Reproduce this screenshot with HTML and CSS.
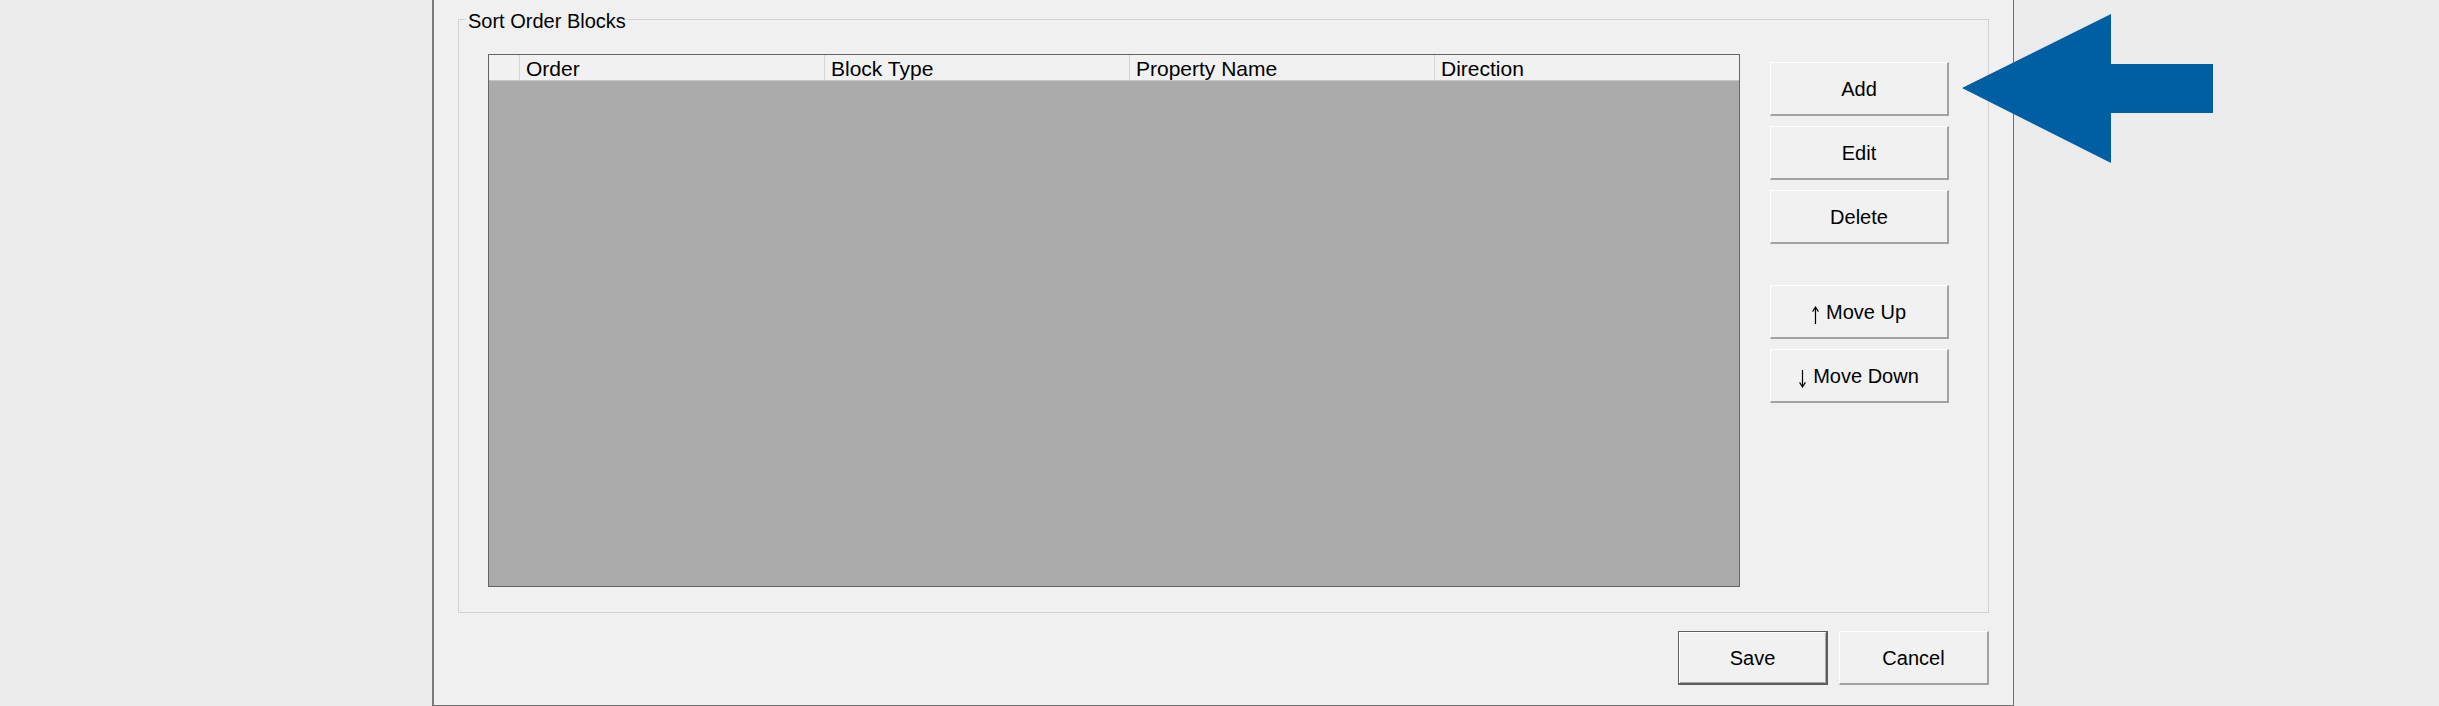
FILE: index.html
```html
<!DOCTYPE html>
<html lang="en">
<head>
<meta charset="utf-8">
<title>Sort Order Blocks</title>
<link rel="stylesheet" href="styles.css">
</head>
<body>
  <div class="window">
    <div class="group">
      <span class="group-title">Sort Order Blocks</span>
      <div class="grid-view">
        <div class="grid-header">
          <div class="col-rowhead"></div>
          <div class="col">Order</div>
          <div class="col">Block Type</div>
          <div class="col">Property Name</div>
          <div class="col col-last">Direction</div>
        </div>
        <div class="grid-body"></div>
      </div>
      <div class="side-buttons">
        <button class="btn">Add</button>
        <button class="btn">Edit</button>
        <button class="btn">Delete</button>
        <div class="spacer"></div>
        <button class="btn"><svg class="btn-arrow" width="7" height="18" viewBox="0 0 7 18" aria-hidden="true"><path d="M3.5 1V18M0.6 5.6L3.5 1L6.4 5.6" fill="none" stroke="#000" stroke-width="1.2"/></svg><span>Move Up</span></button>
        <button class="btn"><svg class="btn-arrow" width="7" height="18" viewBox="0 0 7 18" aria-hidden="true"><path d="M3.5 0V17M0.6 12.4L3.5 17L6.4 12.4" fill="none" stroke="#000" stroke-width="1.2"/></svg><span>Move Down</span></button>
      </div>
    </div>
    <div class="dialog-buttons">
      <button class="btn btn-default">Save</button>
      <button class="btn">Cancel</button>
    </div>
  </div>
  <svg class="callout-arrow" width="251" height="149" viewBox="0 0 251 149" aria-hidden="true">
    <polygon points="0,74 149,0 149,50 251,50 251,99 149,99 149,149" fill="#005fa3"/>
  </svg>
</body>
</html>
```

FILE: styles.css
```css
html, body {
  margin: 0;
  padding: 0;
}

body {
  position: relative;
  width: 2439px;
  height: 706px;
  overflow: hidden;
  background: #ebebeb;
  font-family: "Liberation Sans", Arial, sans-serif;
  color: #000;
}

.window {
  margin-left: 432px;
  width: 1582px;
  height: 706px;
  box-sizing: border-box;
  border-left: 2px solid #7a7a7a;
  border-right: 1px solid #6e6e6e;
  border-bottom: 1px solid #6e6e6e;
  background: #f0f0f0;
  padding: 19px 24px 0 24px;
  display: flex;
  flex-direction: column;
}

.group {
  position: relative;
  height: 594px;
  box-sizing: border-box;
  border: 1px solid #d2d2d2;
  padding: 34px 0 0 29px;
  display: flex;
  align-items: flex-start;
  gap: 30px;
}

.group-title {
  position: absolute;
  top: -10px;
  left: 7px;
  padding: 0 2px;
  background: #f0f0f0;
  font-size: 20px;
  line-height: 23px;
}

.grid-view {
  width: 1252px;
  height: 533px;
  box-sizing: border-box;
  border: 1px solid #646464;
  background: #ababab;
  display: flex;
  flex-direction: column;
}

.grid-header {
  display: flex;
  height: 26px;
  box-sizing: border-box;
  background: #f1f1f1;
  border-bottom: 1px solid #c6c6c6;
  font-size: 21px;
  line-height: 23px;
}

.col-rowhead {
  width: 31px;
  box-sizing: border-box;
  border-right: 1px solid #d4d4d4;
}

.col {
  width: 305px;
  box-sizing: border-box;
  border-right: 1px solid #d4d4d4;
  padding: 2px 0 0 6px;
  white-space: nowrap;
}

.col-last {
  flex: 1;
  border-right: none;
}

.grid-body {
  flex: 1;
}

.side-buttons {
  display: flex;
  flex-direction: column;
  gap: 10px;
  margin-top: 8px;
  width: 179px;
}

.spacer {
  height: 21px;
}

.btn {
  width: 179px;
  height: 54px;
  box-sizing: border-box;
  margin: 0;
  padding: 2px 0 0 0;
  background: #f1f1f1;
  border-style: solid;
  border-width: 1px 2px 2px 1px;
  border-color: #fdfdfd #a2a2a2 #a2a2a2 #fdfdfd;
  border-radius: 0;
  font-family: "Liberation Sans", Arial, sans-serif;
  font-size: 20px;
  line-height: 23px;
  color: #000;
  display: flex;
  align-items: center;
  justify-content: center;
}

.btn-arrow {
  flex: none;
  margin: 4px 7px 0 0;
}

.dialog-buttons {
  display: flex;
  justify-content: flex-end;
  gap: 11px;
  margin-top: 18px;
}

.dialog-buttons .btn {
  width: 150px;
}

.btn-default {
  border-color: #5e5e5e;
  box-shadow: inset 1px 1px 0 #ffffff, inset -1px -1px 0 #a8a8a8;
}

.callout-arrow {
  position: absolute;
  left: 1962px;
  top: 14px;
}
```
